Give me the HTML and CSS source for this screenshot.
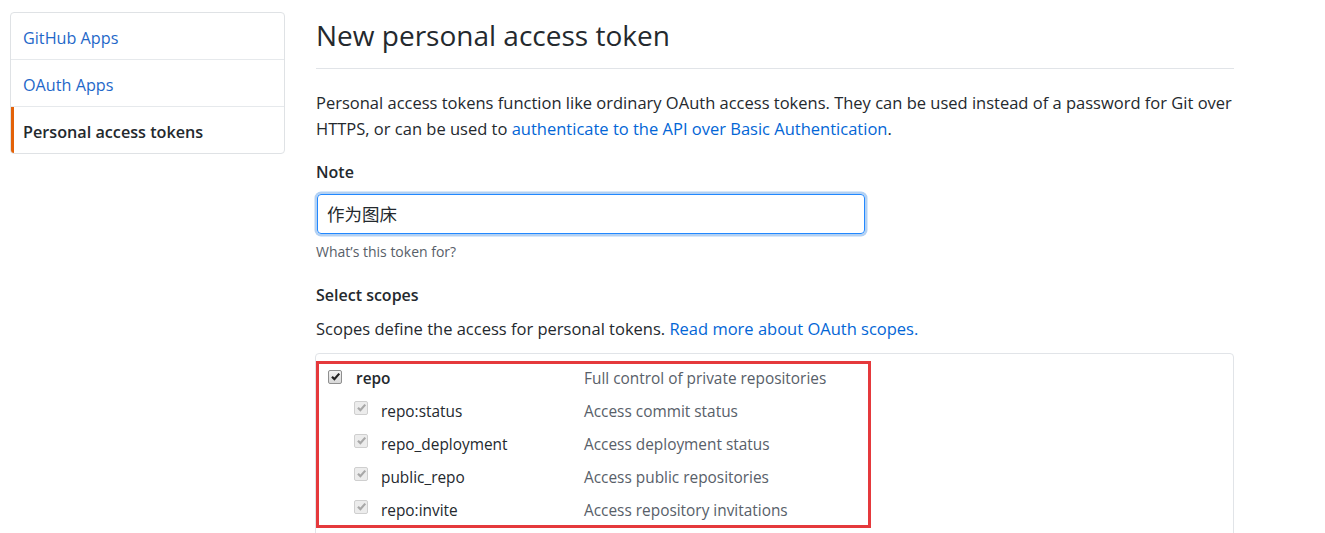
FILE: index.html
```html
<!DOCTYPE html>
<html lang="en">
<head>
<meta charset="utf-8">
<title>New personal access token</title>
<link rel="stylesheet" href="styles.css">
</head>
<body>
<div class="page">
  <nav class="menu">
    <a class="menu-item" href="#">GitHub Apps</a>
    <a class="menu-item" href="#">OAuth Apps</a>
    <a class="menu-item selected" href="#">Personal access tokens</a>
  </nav>
  <main class="main">
    <h1 class="subhead">New personal access token</h1>
    <p class="intro">Personal access tokens function like ordinary OAuth access tokens. They can be used instead of a password for Git over HTTPS, or can be used to <a href="#">authenticate to the API over Basic Authentication</a>.</p>
    <div class="form-group">
      <label class="label">Note</label>
      <div class="input">作为图床</div>
      <p class="note">What’s this token for?</p>
    </div>
    <h3 class="label scopes-title">Select scopes</h3>
    <p class="scopes-desc">Scopes define the access for personal tokens. <a href="#">Read more about OAuth scopes.</a></p>
    <div class="scopes">
      <div class="scope-row parent">
        <span class="cb cb-on"><svg viewBox="0 0 10 10"><path d="M1.8 5.2 L4 7.4 L8.4 2.4" /></svg></span>
        <span class="scope-name">repo</span>
        <span class="scope-desc">Full control of private repositories</span>
      </div>
      <div class="scope-row child">
        <span class="cb cb-dis"><svg viewBox="0 0 10 10"><path d="M1.8 5.2 L4 7.4 L8.4 2.4" /></svg></span>
        <span class="scope-name">repo:status</span>
        <span class="scope-desc">Access commit status</span>
      </div>
      <div class="scope-row child">
        <span class="cb cb-dis"><svg viewBox="0 0 10 10"><path d="M1.8 5.2 L4 7.4 L8.4 2.4" /></svg></span>
        <span class="scope-name">repo_deployment</span>
        <span class="scope-desc">Access deployment status</span>
      </div>
      <div class="scope-row child">
        <span class="cb cb-dis"><svg viewBox="0 0 10 10"><path d="M1.8 5.2 L4 7.4 L8.4 2.4" /></svg></span>
        <span class="scope-name">public_repo</span>
        <span class="scope-desc">Access public repositories</span>
      </div>
      <div class="scope-row child">
        <span class="cb cb-dis"><svg viewBox="0 0 10 10"><path d="M1.8 5.2 L4 7.4 L8.4 2.4" /></svg></span>
        <span class="scope-name">repo:invite</span>
        <span class="scope-desc">Access repository invitations</span>
      </div>
      <div class="highlight"></div>
    </div>
  </main>
</div>
</body>
</html>
```
FILE: styles.css
```css
* { box-sizing: border-box; }
html, body { margin: 0; padding: 0; background: #fff; }
body {
  font-family: "Open Sans", "Noto Sans", "Noto Sans CJK SC", sans-serif;
  font-size: 16.5px;
  color: #24292e;
  line-height: 26px;
  overflow: hidden;
}
a { color: #0366d6; text-decoration: none; }

.page {
  display: flex;
  align-items: flex-start;
  padding: 12px 0 0 10px;
  gap: 31px;
}

.menu {
  width: 275px;
  flex: none;
  border: 1px solid #dfe2e5;
  border-radius: 4px;
  display: flex;
  flex-direction: column;
  overflow: hidden;
  font-size: 16.2px;
}
.menu-item {
  display: block;
  height: 47px;
  padding-top: 4px;
  line-height: 42px;
  padding-left: 12px;
  border-bottom: 1px solid #e6e9ec;
  color: #1f68c9;
}
.menu-item:last-child { border-bottom: 0; height: 46px; }
.menu-item.selected {
  color: #24292e;
  font-weight: 600;
  border-left: 3px solid #e36209;
  padding-left: 9px;
}

.main {
  width: 918px;
  flex: none;
}

.subhead {
  margin: 1px 0 0;
  font-size: 28px;
  font-weight: 400;
  line-height: 45px;
  padding-bottom: 10px;
  border-bottom: 1px solid #e1e4e8;
}

.intro { margin: 21px 0 0; }

.form-group { margin-top: 17px; }
.label {
  display: block;
  font-weight: 600;
  font-size: 16px;
  line-height: 26px;
  margin: 0;
}
.input {
  margin-top: 9px;
  width: 548px;
  height: 40px;
  border: 1px solid #2188ff;
  border-radius: 4px;
  box-shadow: 0 0 0 2.5px rgba(3, 102, 214, 0.3);
  padding: 0 9px;
  line-height: 38px;
  font-size: 17.5px;
  color: #24292e;
  margin-left: 1px;
}
.note {
  margin: 8px 0 0;
  font-size: 14px;
  line-height: 20px;
  color: #586069;
}

.scopes-title { margin-top: 20px; }
.scopes-desc { margin: 8px 0 0; }

.scopes {
  position: relative;
  margin-top: 11px;
  margin-left: -1px;
  height: 190px;
  border: 1px solid #e1e4e8;
  border-radius: 4px;
  padding-top: 8px;
  font-size: 15.4px;
}
.scope-row {
  display: flex;
  align-items: center;
  height: 33px;
}
.cb {
  width: 14px;
  height: 14px;
  border-radius: 2px;
  flex: none;
  display: flex;
  align-items: center;
  justify-content: center;
}
.cb svg { width: 11px; height: 11px; fill: none; stroke-width: 2; }
.cb-on {
  border: 1px solid #8f8f8f;
  background: linear-gradient(#f2f2f2, #d8d8d8);
}
.cb-on svg { stroke: #222; }
.cb-dis {
  border: 1px solid #cfcfcf;
  background: #ececec;
}
.cb-dis svg { stroke: #a8a8a8; }

.parent { padding-left: 12px; }
.parent .cb { margin-top: -4px; }
.child { padding-left: 38px; }
.child .cb { margin-top: -8px; }
.scope-name { width: 228px; margin-left: 14px; flex: none; }
.child .scope-name { margin-left: 13px; width: 203px; }
.parent .scope-name { font-weight: 600; }
.scope-desc { color: #586069; }

.highlight {
  position: absolute;
  left: 0;
  top: 7px;
  width: 555px;
  height: 167px;
  border: 3px solid #e5393c;
  pointer-events: none;
}
```
